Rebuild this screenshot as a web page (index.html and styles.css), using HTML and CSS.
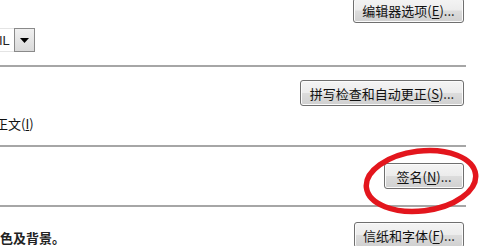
FILE: index.html
```html
<!DOCTYPE html>
<html lang="zh-CN">
<head>
<meta charset="utf-8">
<link rel="stylesheet" href="styles.css">
</head>
<body>
<div class="page">
  <section class="sec sec-1">
    <div class="row row-right"><button class="btn btn-editor">编辑器选项(<u>E</u>)...</button></div>
    <div class="row">
      <div class="combo">
        <span class="combo-text">IL</span>
        <span class="combo-btn"><svg width="9" height="5" viewBox="0 0 9 5"><path d="M0 0H9L4.5 5Z" fill="#000"/></svg></span>
      </div>
    </div>
  </section>
  <hr class="rule">
  <section class="sec sec-2">
    <div class="row row-right"><button class="btn btn-spell">拼写检查和自动更正(<u>S</u>)...</button></div>
    <div class="row"><span class="label label-cut">正文(<u>I</u>)</span></div>
  </section>
  <hr class="rule">
  <section class="sec sec-3">
    <div class="row row-right"><button class="btn btn-sign">签名(<u>N</u>)...</button></div>
  </section>
  <hr class="rule">
  <section class="sec-4">
    <span class="label label-bold">色及背景。</span>
    <button class="btn btn-paper">信纸和字体(<u>F</u>)...</button>
  </section>
  <svg class="circle" width="480" height="246" viewBox="0 0 480 246">
    <ellipse cx="421" cy="181" rx="55" ry="30" transform="rotate(-7 421 181)" fill="none" stroke="#e3161d" stroke-width="5.5"/>
  </svg>
</div>
</body>
</html>
```
FILE: styles.css
```css
html, body {
  margin: 0;
  padding: 0;
  background: #fff;
}
body {
  font-family: "Noto Sans CJK SC", "Noto Sans", sans-serif;
  font-size: 13px;
  color: #111;
  overflow: hidden;
  width: 480px;
  height: 246px;
}
.page {
  position: relative;
  width: 480px;
  height: 246px;
  overflow: hidden;
}
.sec {
  display: flex;
  flex-direction: column;
  padding-right: 16px;
}
.row {
  display: flex;
  align-items: center;
}
.row-right {
  justify-content: flex-end;
}
.btn {
  box-sizing: border-box;
  height: 26px;
  padding: 0;
  border: 1px solid #6f6f6f;
  border-radius: 3px;
  background: linear-gradient(#f4f4f4 0%, #ececec 48%, #dcdcdc 52%, #d0d0d0 100%);
  box-shadow: inset 0 0 0 1px #fbfbfb;
  font-family: "Noto Sans CJK SC", "Noto Sans", sans-serif;
  font-size: 13px;
  color: #111;
  display: flex;
  align-items: center;
  justify-content: center;
  line-height: 1;
  flex-shrink: 0;
}
.btn u {
  text-underline-offset: 2px;
}
.btn-editor {
  width: 111px;
  height: 25px;
  margin-top: -2px;
}
.btn-spell {
  width: 164px;
  margin-top: 13px;
}
.btn-sign {
  width: 80px;
  margin-top: 16px;
}
.btn-paper {
  width: 110px;
  margin-top: 15px;
}
.combo {
  display: flex;
  align-items: stretch;
  height: 24px;
  margin-top: 5px;
}
.combo-text {
  display: flex;
  align-items: center;
  width: 15px;
  margin-left: -1px;
  border-top: 1px solid #e4e4e4;
  border-bottom: 1px solid #e4e4e4;
  font-family: "Liberation Sans", sans-serif;
  font-size: 13px;
  color: #222;
}
.combo-btn {
  box-sizing: border-box;
  width: 21px;
  border: 1px solid #8a8a8a;
  background: linear-gradient(#f0f0f0, #dadada);
  display: flex;
  align-items: center;
  justify-content: center;
}
.rule {
  box-sizing: border-box;
  margin: 0;
  width: 466px;
  height: 2px;
  border: 0;
  background: #a6a6a6;
}
.sec-1 {
  height: 65px;
}
.sec-2 {
  height: 78px;
}
.sec-3 {
  height: 58px;
}
.sec-4 {
  display: flex;
  justify-content: space-between;
  align-items: flex-start;
  padding-right: 16px;
}
.label {
  display: block;
  line-height: 14px;
  font-size: 13px;
  color: #111;
}
.label-cut {
  margin-top: 11px;
  margin-left: -5px;
}
.label-bold {
  font-weight: 700;
  color: #222;
  margin-top: 24px;
}
.circle {
  position: absolute;
  left: 0;
  top: 0;
  pointer-events: none;
}
```
